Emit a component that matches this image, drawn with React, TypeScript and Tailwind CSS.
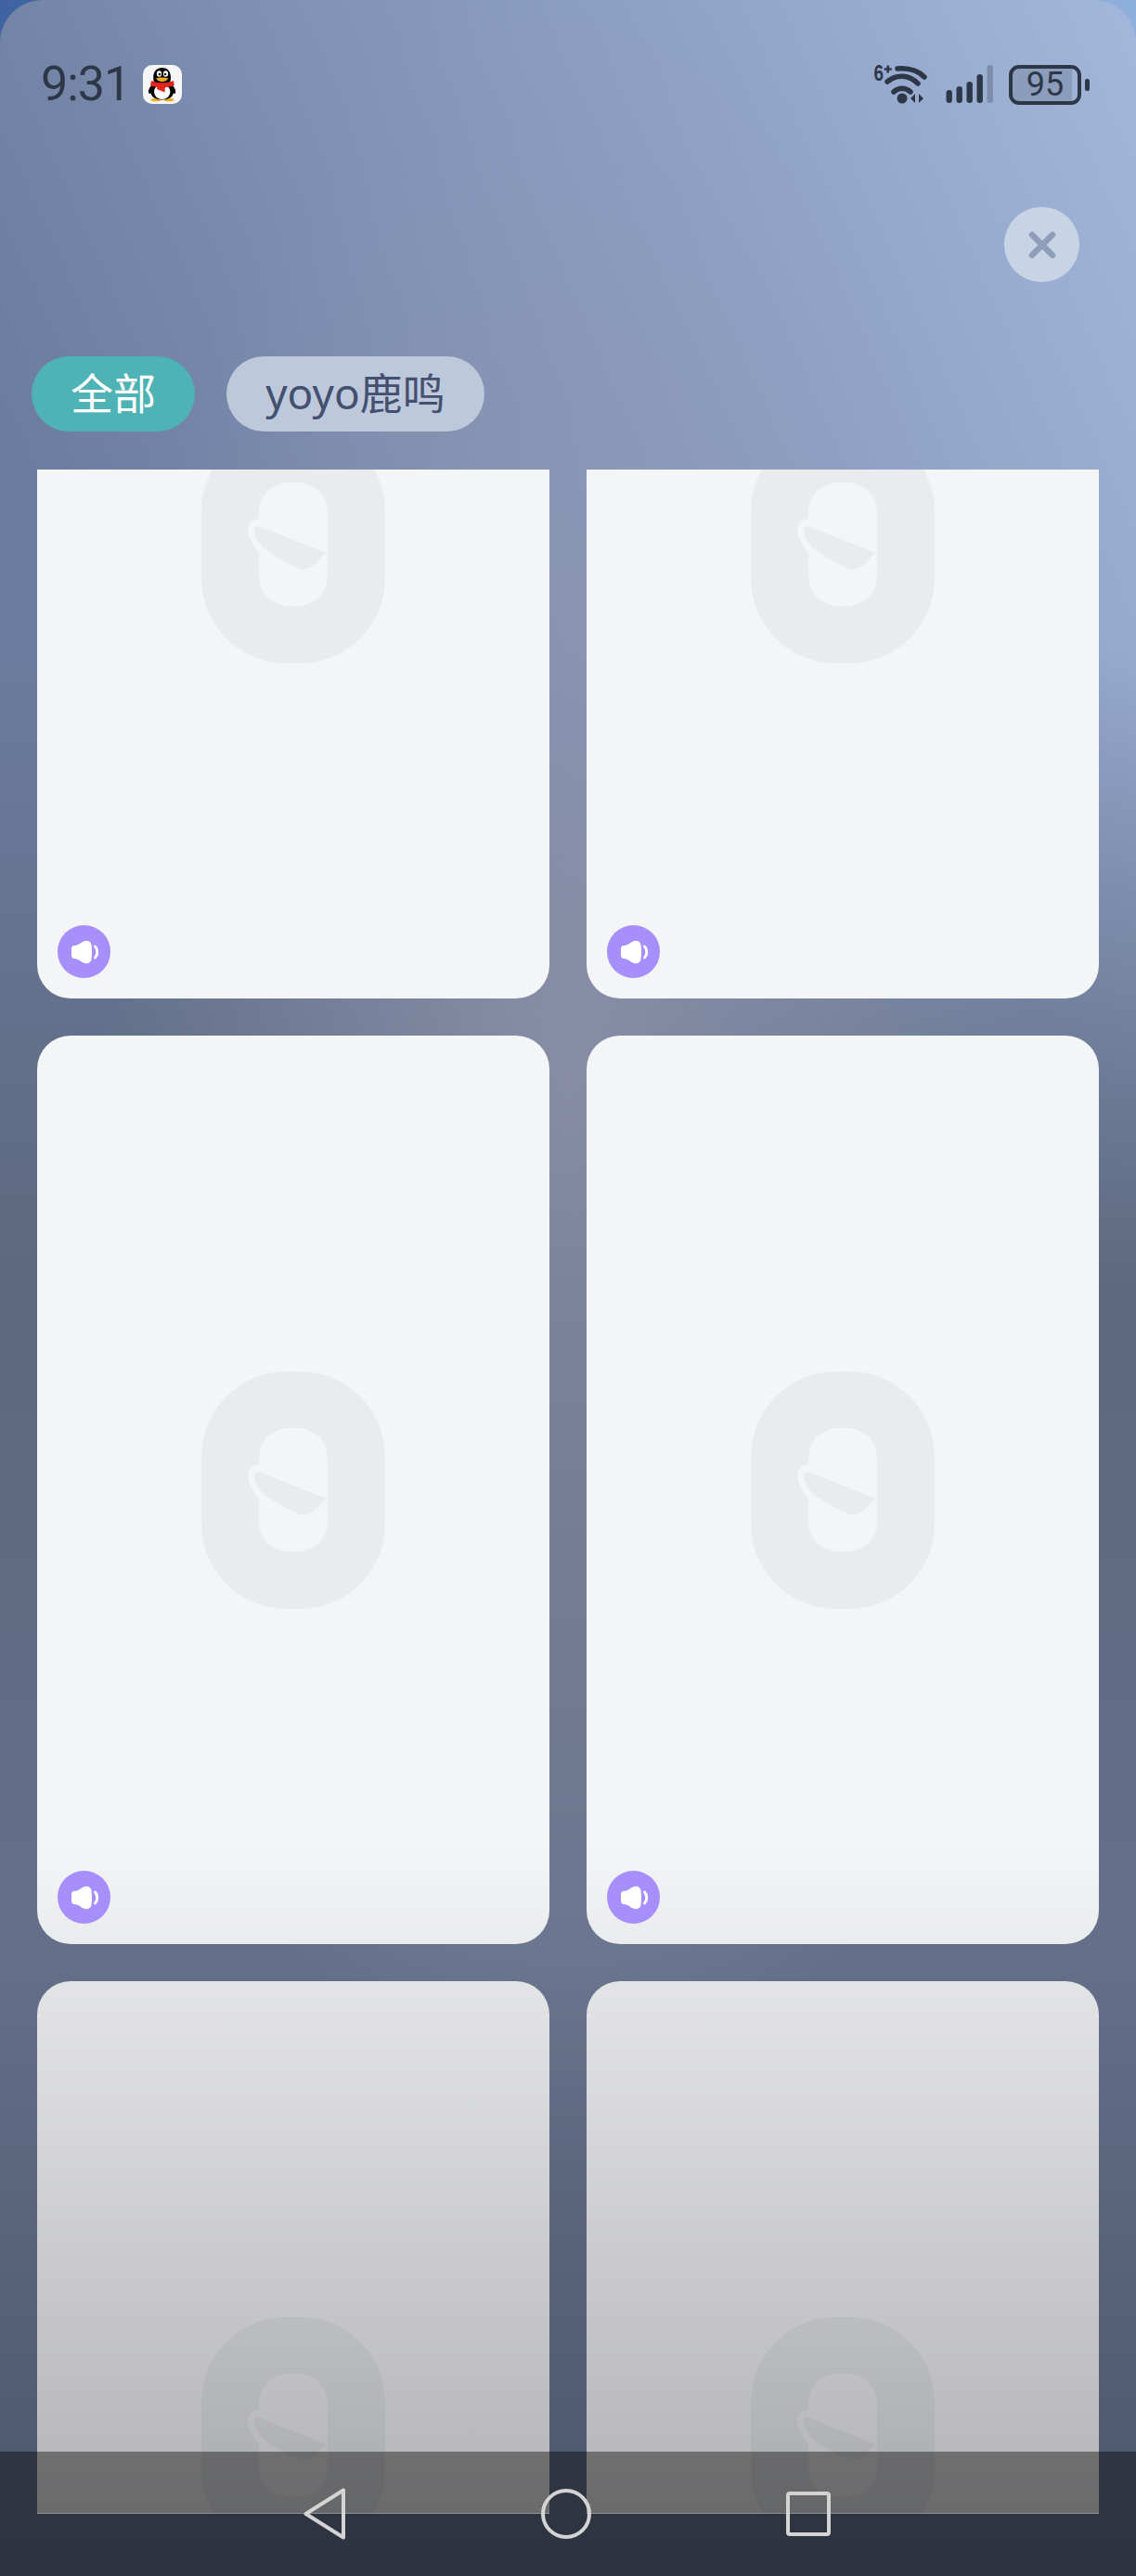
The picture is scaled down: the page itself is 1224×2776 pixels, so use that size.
import React from 'react'

const FONT = "font-['Noto_Sans','Noto_Sans_CJK_SC',sans-serif]"

/**
 * QQ app notification icon
 */
function QQIcon() {
  return (
    <svg width="42" height="42" viewBox="0 0 42 42">
      <rect width="42" height="42" rx="10" fill="#f6f6f7" />
      <ellipse cx="14" cy="37.5" rx="5.5" ry="1.8" fill="#eeaa22" />
      <ellipse cx="28" cy="37.5" rx="5.5" ry="1.8" fill="#eeaa22" />
      <path d="M6 29c0-4 3-7 6-10-.5-2-.8-3.5-.8-5.5C11.200 7 15 3 20.700 3S30 7 30 13.500c0 2-.3 3.500-.8 5.500 3 3 6 6 6 10 0 2-1 2.500-2.500 1.500-.5 4-5 7-12 7s-11.500-3-12-7C7 31.500 6 31 6 29z" fill="#050505" />
      <ellipse cx="20.700" cy="29" rx="8.700" ry="8" fill="#fbfbfb" />
      <path d="M9 17c7 3 16 3 24 0l.8 5c-4 1.500-8 2-10 2.200l-.2 5.300-8.600-3.500.5-2C12.500 23.500 10 23 8 22z" fill="#e3231f" />
      <ellipse cx="17.500" cy="9.500" rx="2.600" ry="3.300" fill="#fff" />
      <ellipse cx="24.500" cy="9.500" rx="2.600" ry="3.300" fill="#fff" />
      <circle cx="18" cy="10" r="1.300" fill="#111" />
      <circle cx="24" cy="10" r="1.300" fill="#111" />
      <path d="M14 14.500c3-1.500 10-1.500 13.500 0-1.500 2.500-4 3.500-6.700 3.500s-5.300-1-6.800-3.500z" fill="#f0ab1e" />
    </svg>
  )
}

function WifiIcon() {
  return (
    <svg width="62" height="54" viewBox="8 14 62 54" fill="none" stroke="#2d3748" strokeLinecap="round">
      <text x="11.500" y="36.500" fontSize="23" fontWeight="700" fill="#2d3748" stroke="none" fontFamily="Liberation Sans, sans-serif" textLength="10.500" lengthAdjust="spacingAndGlyphs">6</text>
      <path d="M26.700 20.500v8M22.700 24.500h8" strokeWidth="2.500" strokeLinecap="butt" />
      <path d="M37 24c12-1 22 2 29 9" strokeWidth="5.500" />
      <path d="M26 38c11-9 24-7 33 2" strokeWidth="5.500" />
      <path d="M33 49c5-5 13-5 18 0" strokeWidth="5.500" />
      <circle cx="42" cy="56" r="5.500" fill="#2d3748" stroke="none" />
      <path d="M56 51v10l-5-5zM60 51v10l5-5z" fill="#2d3748" stroke="none" />
    </svg>
  )
}

function SignalIcon() {
  return (
    <svg width="52" height="42" viewBox="0 0 52 42" fill="#2d3748">
      <rect x="0.500" y="27" width="6.400" height="14" rx="3.200" />
      <rect x="11.500" y="23" width="6.400" height="18" rx="3.200" />
      <rect x="22.500" y="18" width="6.400" height="23" rx="3.200" />
      <rect x="33.500" y="10" width="6.400" height="31" rx="3.200" />
      <rect x="44.500" y="0" width="6.400" height="41" rx="3.200" opacity="0.28" />
    </svg>
  )
}

function Battery() {
  return (
    <div className="flex items-center gap-[4px]">
      <div className="w-[78px] h-[43px] rounded-[11px] border-[4px] border-[#2d3748] bg-[linear-gradient(to_right,#8b9dbb_92%,transparent_92%)] flex items-center justify-center font-['Roboto',sans-serif] text-[36px] leading-none text-[#2d3748]">
        95
      </div>
      <div className="w-[5px] h-[13px] rounded-[2px] bg-[#2d3748]" />
    </div>
  )
}

/**
 * Placeholder mark shown while the card artwork is loading
 */
function PlaceholderLogo() {
  return (
    <svg width="198" height="256" viewBox="27 28 198 256">
      <rect x="27" y="28" width="198" height="256" rx="92" fill="#e9ebef" />
      <rect x="89" y="89" width="74" height="133" rx="32" fill="#f4f5f7" />
      <path d="M90 128C78 127 74 140 80 151C83 157 86 161 90 166z" fill="#f4f5f7" />
      <path d="M88 136L162 165C155 168 150 183 135 182.500C127 180 108 170 97 162C88 156 83 144 84 139C84.500 136.500 86 135.500 88 136z" fill="#e9ebef" />
    </svg>
  )
}

function SpeakerBadge() {
  return (
    <div className="absolute left-[22px] bottom-[22px] w-[57px] h-[57px] rounded-full bg-[#a78ffb] flex items-center justify-center">
      <svg width="32" height="26" viewBox="0 0 32 26" fill="#fff">
        <path d="M5 6C9 6 12 3 15 1.500C19 -.5 23 1.500 23.500 5C24.200 10 24.200 16 23.500 21C23 24.500 19 26.500 15 24.500C12 23 9 20 5 20C2.500 20 2 17.500 2 15.500V10.500C2 8 2.500 6 5 6z" />
        <path d="M27.500 7C30.500 10 30.500 16 27.500 19" fill="none" stroke="#fff" strokeWidth="3" strokeLinecap="round" />
      </svg>
    </div>
  )
}

type CardTone = 'plain' | 'fadeStart' | 'fade'

function SoundCard({ tone }: { tone: CardTone }) {
  return (
    <div className="relative h-[979px] rounded-[36px] overflow-hidden bg-[#f4f5f7] flex items-center justify-center">
      <PlaceholderLogo />
      {tone === 'fadeStart' && (
        <div className="absolute inset-x-0 bottom-0 h-[110px] bg-gradient-to-b from-transparent to-black/[0.04]" />
      )}
      {tone === 'fade' && (
        <div className="absolute inset-x-0 top-0 h-[573px] bg-gradient-to-b from-black/[0.07] to-black/[0.27]" />
      )}
      <SpeakerBadge />
    </div>
  )
}

export default function App() {
  const tones: CardTone[] = ['plain', 'plain', 'fadeStart', 'fadeStart', 'fade', 'fade']

  return (
    <div className={`${FONT} relative w-[1224px] h-[2776px] overflow-hidden bg-[linear-gradient(to_right,#3f62a3,#8fb0dc)]`}>
      <div className="h-full rounded-t-[46px] overflow-hidden bg-[radial-gradient(ellipse_500px_1200px_at_612px_1150px,rgba(150,152,175,0.7),transparent),linear-gradient(to_bottom,transparent_0,transparent_700px,#5c687e_1400px,#64708a_2100px,#4f5b70_2640px,#4d5669_2776px),linear-gradient(to_bottom_left,#a3b7da_0,#8da1c5_500px,#6c7c9e_1300px)]">
        {/* Status bar */}
        <div className="flex items-center justify-between pt-[70px] pl-[44px] pr-[50px] h-[112px]">
          <div className="flex items-center gap-[18px]">
            <span className="w-[92px] font-['Roboto',sans-serif] text-[52px] leading-[42px] tracking-[-1px] text-[#2d3748]">9:31</span>
            <QQIcon />
          </div>
          <div className="flex items-center">
            <WifiIcon />
            <div className="ml-[19px] mr-[16px]">
              <SignalIcon />
            </div>
            <Battery />
          </div>
        </div>

        {/* Close button */}
        <div className="flex justify-end pr-[61px] mt-[111px]">
          <button className="w-[81px] h-[81px] rounded-full bg-[#c8d4e6] flex items-center justify-center">
            <svg width="30" height="30" viewBox="0 0 30 30" fill="none" stroke="#8e9db8" strokeWidth="6.500" strokeLinecap="round">
              <path d="M4 4l22 22M26 4L4 26" />
            </svg>
          </button>
        </div>

        {/* Filter tabs */}
        <div className="flex gap-[34px] pl-[34px] mt-[80px]">
          <div className="w-[176px] h-[81px] pb-[2px] rounded-full bg-[#4fb3b5] flex items-center justify-center text-[46px] text-white">全部</div>
          <div className="w-[278px] h-[81px] pb-[2px] rounded-full bg-[#bec8db] flex items-center justify-center text-[46px] text-[#43506f]">yoyo鹿鸣</div>
        </div>

        {/* Sound list, scrolled partway through the first row */}
        <div className="mt-[41px] h-[2203px] overflow-hidden px-[40px]">
          <div className="-mt-[409px] grid grid-cols-2 gap-x-[40px] gap-y-[40px]">
            {tones.map((tone, i) => (
              <SoundCard key={i} tone={tone} />
            ))}
          </div>
        </div>
      </div>

      {/* Navigation bar */}
      <div className="absolute inset-x-0 bottom-0 h-[134px] bg-black/40 flex items-center justify-center">
        <div className="flex items-center gap-[210px] ml-[-3px]">
          <svg width="46" height="56" viewBox="0 0 46 56" fill="none" stroke="#d4d4d4" strokeWidth="4" strokeLinejoin="round">
            <path d="M43 2.500v51L2.500 28z" />
          </svg>
          <svg width="54" height="54" viewBox="0 0 54 54" fill="none" stroke="#d4d4d4" strokeWidth="4">
            <circle cx="27" cy="27" r="25" />
          </svg>
          <svg width="48" height="48" viewBox="0 0 48 48" fill="none" stroke="#d4d4d4" strokeWidth="4">
            <rect x="2" y="2" width="44" height="44" rx="2" />
          </svg>
        </div>
      </div>
    </div>
  )
}
